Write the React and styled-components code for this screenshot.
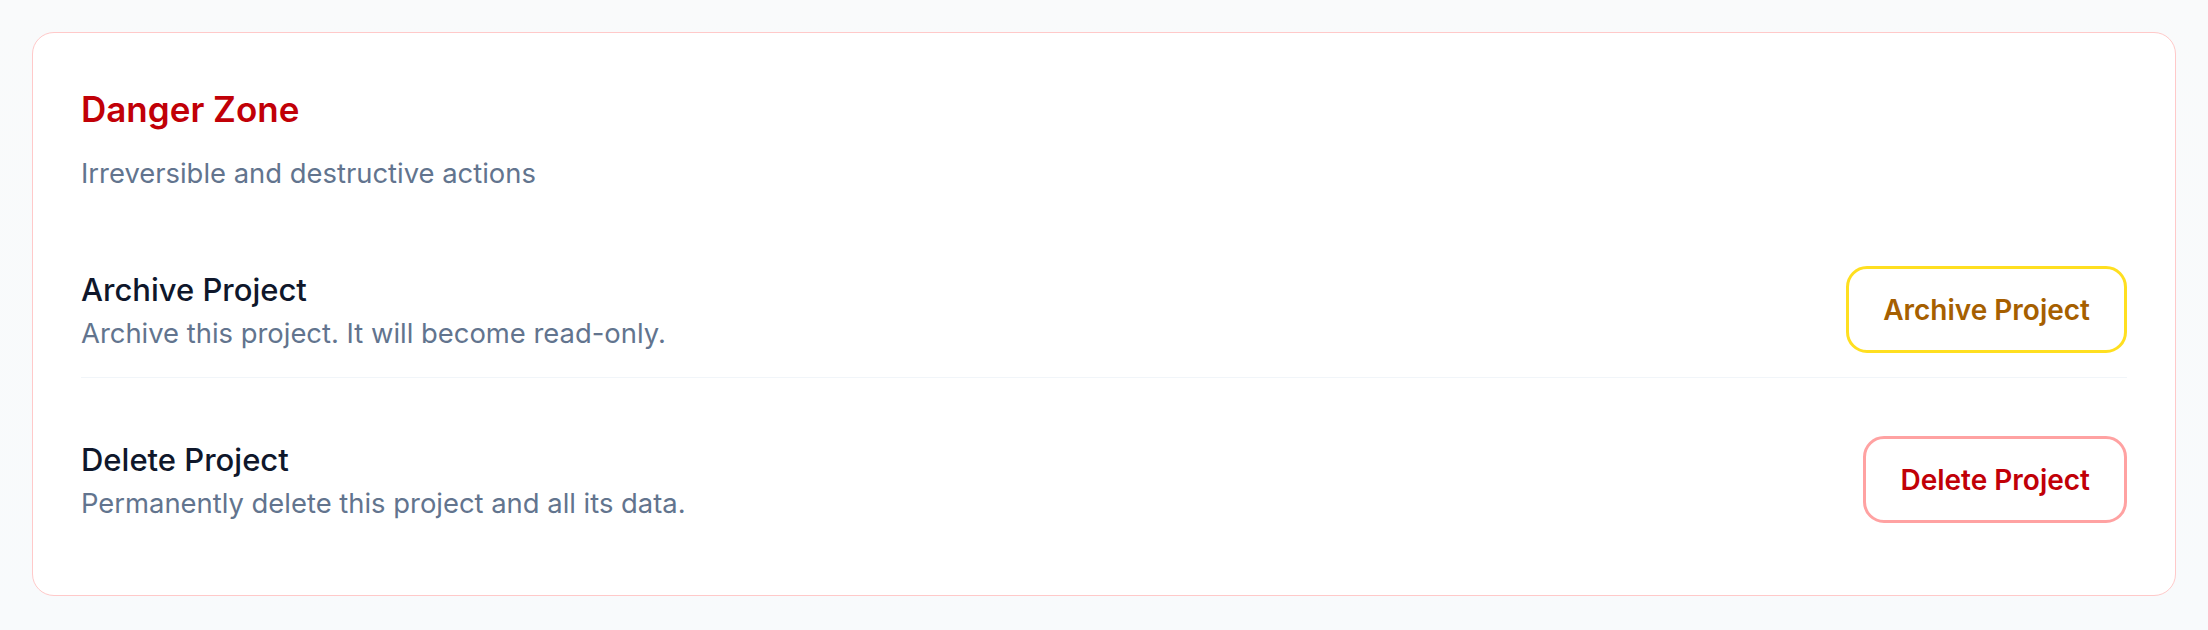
import React from "react";
import styled, { createGlobalStyle } from "styled-components";

const GlobalStyle = createGlobalStyle`
  * { box-sizing: border-box; }
  html, body {
    margin: 0;
    padding: 0;
    background: #f8fafc;
    font-family: Inter, "Noto Sans", "Liberation Sans", sans-serif;
    -webkit-font-smoothing: antialiased;
  }
`;

const Page = styled.div`
  padding: 32px;
  min-height: 630px;
  background: linear-gradient(180deg, #f9fafb 0%, #f8fafc 100%);
`;

const Card = styled.section`
  background: #fff;
  border: 1px solid #ffc9c9;
  border-radius: 22px;
  padding: 48px;
`;

const Header = styled.header`
  display: flex;
  flex-direction: column;
  gap: 16px;
  margin-bottom: 49px;
`;

const Title = styled.h2`
  margin: 0;
  font-size: 35px;
  line-height: 56px;
  font-weight: 600;
  color: #c10007;
`;

const Subtitle = styled.p`
  margin: 0;
  font-size: 27.4px;
  line-height: 40px;
  color: #62748e;
`;

const Rows = styled.div`
  display: flex;
  flex-direction: column;
  gap: 34px;
`;

const Row = styled.div`
  display: flex;
  align-items: center;
  justify-content: space-between;
  padding: 24px 0;
  border-bottom: ${({ $divider }) => ($divider ? "1px solid #f1f5f9" : "none")};
`;

const Info = styled.div`
  display: flex;
  flex-direction: column;
`;

const RowTitle = styled.h3`
  margin: 0;
  font-size: 31px;
  line-height: 46px;
  font-weight: 500;
  color: #0f172b;
`;

const RowText = styled.p`
  margin: 0;
  font-size: 27.4px;
  line-height: 40px;
  color: #62748e;
`;

const tones = {
  amber: { border: "#ffdf20", color: "#a65f00" },
  red: { border: "#ffa2a2", color: "#c10007" },
};

const ActionButton = styled.button`
  height: 87px;
  padding: 0 34px;
  border: 3px solid ${({ $tone }) => tones[$tone].border};
  border-radius: 21px;
  background: #fff;
  color: ${({ $tone }) => tones[$tone].color};
  font-family: inherit;
  font-size: 28px;
  font-weight: 600;
  cursor: pointer;
`;

const actions = [
  {
    title: "Archive Project",
    text: "Archive this project. It will become read-only.",
    button: "Archive Project",
    tone: "amber",
  },
  {
    title: "Delete Project",
    text: "Permanently delete this project and all its data.",
    button: "Delete Project",
    tone: "red",
  },
];

export default function App() {
  return (
    <>
      <GlobalStyle />
      <Page>
        <Card>
          <Header>
            <Title>Danger Zone</Title>
            <Subtitle>Irreversible and destructive actions</Subtitle>
          </Header>
          <Rows>
            {actions.map((a, i) => (
              <Row key={a.title} $divider={i < actions.length - 1}>
                <Info>
                  <RowTitle>{a.title}</RowTitle>
                  <RowText>{a.text}</RowText>
                </Info>
                <ActionButton $tone={a.tone}>{a.button}</ActionButton>
              </Row>
            ))}
          </Rows>
        </Card>
      </Page>
    </>
  );
}
